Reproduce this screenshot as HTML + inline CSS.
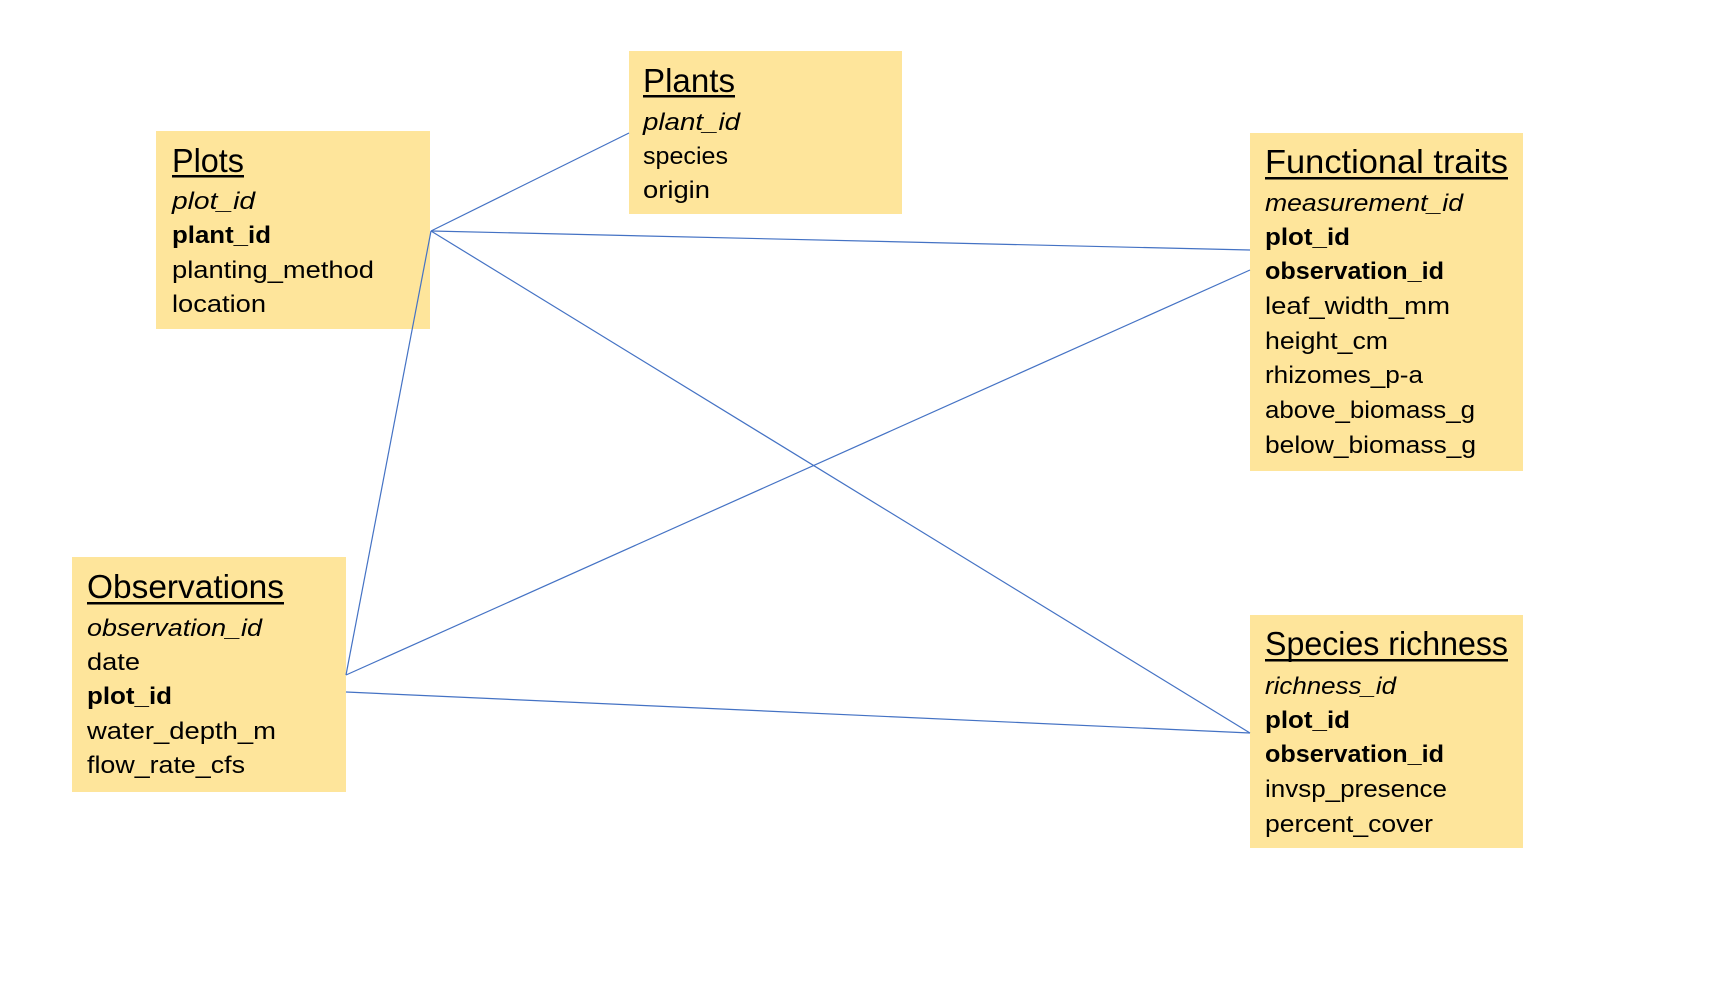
<!DOCTYPE html>
<html><head><meta charset="utf-8"><style>
html,body{margin:0;padding:0;background:#fff;width:1716px;height:1000px;overflow:hidden}
svg{display:block}
text{font-family:"Liberation Sans",sans-serif;fill:#000}
.t{font-size:33px}
.r{font-size:24px}
.i{font-style:italic}
.b{font-weight:bold}
</style></head><body>
<svg width="1716" height="1000" viewBox="0 0 1716 1000" xmlns="http://www.w3.org/2000/svg">
<g fill="#FEE59B">
<rect x="629" y="51" width="273" height="163"/>
<rect x="156" y="131" width="274" height="198"/>
<rect x="1250" y="133" width="273" height="338"/>
<rect x="72" y="557" width="274" height="235"/>
<rect x="1250" y="615" width="273" height="233"/>
</g>
<g stroke="#4472C4" stroke-width="1.2" fill="none">
<line x1="431" y1="231" x2="629" y2="133"/>
<line x1="431" y1="231" x2="1250" y2="250"/>
<line x1="431" y1="231" x2="346" y2="675"/>
<line x1="431" y1="231" x2="1250" y2="733"/>
<line x1="346" y1="675" x2="1250" y2="270"/>
<line x1="346" y1="692" x2="1250" y2="733"/>
</g>
<text class="t" x="643" y="92" textLength="92" lengthAdjust="spacingAndGlyphs">Plants</text>
<rect x="643" y="95" width="92" height="2.5"/>
<text class="r i" x="643" y="130" textLength="97" lengthAdjust="spacingAndGlyphs">plant_id</text>
<text class="r" x="643" y="164" textLength="85" lengthAdjust="spacingAndGlyphs">species</text>
<text class="r" x="643" y="198" textLength="67" lengthAdjust="spacingAndGlyphs">origin</text>
<text class="t" x="172" y="172" textLength="72" lengthAdjust="spacingAndGlyphs">Plots</text>
<rect x="172" y="175" width="72" height="2.5"/>
<text class="r i" x="172" y="209" textLength="83" lengthAdjust="spacingAndGlyphs">plot_id</text>
<text class="r b" x="172" y="243" textLength="99" lengthAdjust="spacingAndGlyphs">plant_id</text>
<text class="r" x="172" y="278" textLength="202" lengthAdjust="spacingAndGlyphs">planting_method</text>
<text class="r" x="172" y="312" textLength="94" lengthAdjust="spacingAndGlyphs">location</text>
<text class="t" x="1265" y="173" textLength="243" lengthAdjust="spacingAndGlyphs">Functional traits</text>
<rect x="1265" y="177" width="243" height="2.5"/>
<text class="r i" x="1265" y="211" textLength="198" lengthAdjust="spacingAndGlyphs">measurement_id</text>
<text class="r b" x="1265" y="245" textLength="85" lengthAdjust="spacingAndGlyphs">plot_id</text>
<text class="r b" x="1265" y="279" textLength="179" lengthAdjust="spacingAndGlyphs">observation_id</text>
<text class="r" x="1265" y="314" textLength="185" lengthAdjust="spacingAndGlyphs">leaf_width_mm</text>
<text class="r" x="1265" y="349" textLength="123" lengthAdjust="spacingAndGlyphs">height_cm</text>
<text class="r" x="1265" y="383" textLength="158" lengthAdjust="spacingAndGlyphs">rhizomes_p-a</text>
<text class="r" x="1265" y="418" textLength="210" lengthAdjust="spacingAndGlyphs">above_biomass_g</text>
<text class="r" x="1265" y="453" textLength="211" lengthAdjust="spacingAndGlyphs">below_biomass_g</text>
<text class="t" x="87" y="598" textLength="197" lengthAdjust="spacingAndGlyphs">Observations</text>
<rect x="87" y="602" width="197" height="2.5"/>
<text class="r i" x="87" y="636" textLength="175" lengthAdjust="spacingAndGlyphs">observation_id</text>
<text class="r" x="87" y="670" textLength="53" lengthAdjust="spacingAndGlyphs">date</text>
<text class="r b" x="87" y="704" textLength="85" lengthAdjust="spacingAndGlyphs">plot_id</text>
<text class="r" x="87" y="739" textLength="189" lengthAdjust="spacingAndGlyphs">water_depth_m</text>
<text class="r" x="87" y="773" textLength="158" lengthAdjust="spacingAndGlyphs">flow_rate_cfs</text>
<text class="t" x="1265" y="655" textLength="243" lengthAdjust="spacingAndGlyphs">Species richness</text>
<rect x="1265" y="659" width="243" height="2.5"/>
<text class="r i" x="1265" y="694" textLength="131" lengthAdjust="spacingAndGlyphs">richness_id</text>
<text class="r b" x="1265" y="728" textLength="85" lengthAdjust="spacingAndGlyphs">plot_id</text>
<text class="r b" x="1265" y="762" textLength="179" lengthAdjust="spacingAndGlyphs">observation_id</text>
<text class="r" x="1265" y="797" textLength="182" lengthAdjust="spacingAndGlyphs">invsp_presence</text>
<text class="r" x="1265" y="832" textLength="168" lengthAdjust="spacingAndGlyphs">percent_cover</text>
</svg>
</body></html>
